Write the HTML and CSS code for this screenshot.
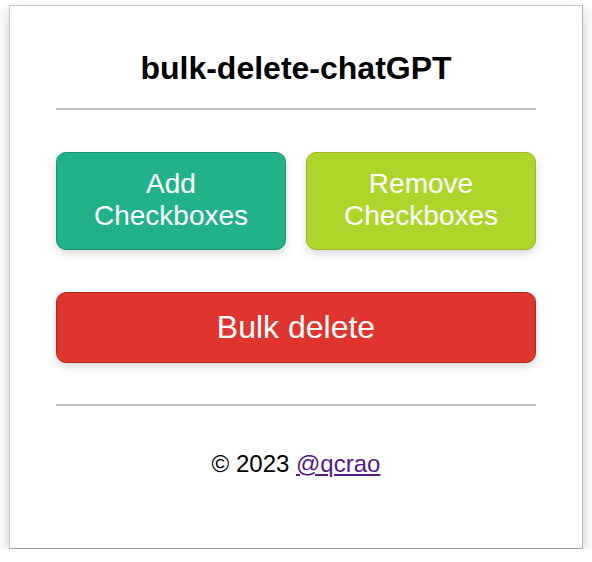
FILE: index.html
```html
<!DOCTYPE html>
<html>
<head>
<meta charset="utf-8">
<link rel="stylesheet" href="styles.css">
</head>
<body>
<div class="card">
  <h1 class="title">bulk-delete-chatGPT</h1>
  <hr class="rule">
  <div class="row">
    <button class="btn btn-add">Add Checkboxes</button>
    <button class="btn btn-remove">Remove Checkboxes</button>
  </div>
  <button class="btn-bulk">Bulk delete</button>
  <hr class="rule rule-bottom">
  <p class="footer">© 2023 <a href="#">@qcrao</a></p>
</div>
</body>
</html>
```

FILE: styles.css
```css
html, body {
  margin: 0;
  padding: 0;
  background: #ffffff;
}

body {
  font-family: "Liberation Sans", Arial, Helvetica, sans-serif;
  color: #000;
}

.card {
  box-sizing: border-box;
  width: 574px;
  height: 544px;
  margin: 5px 0 0 9px;
  padding: 44px 46px 0;
  border: 1px solid #c9c9c9;
  border-bottom-color: #9f9f9f;
  border-right-color: #b5b5b5;
  background: #fff;
  box-shadow: 0 5px 12px rgba(0, 0, 0, 0.22);
}

.title {
  margin: 0;
  font-size: 32px;
  line-height: 37px;
  font-weight: bold;
  text-align: center;
}

.rule {
  margin: 21px 0 0;
  height: 2px;
  border: 0;
  background: #c3c3c3;
}

.rule-bottom {
  margin-top: 41px;
}

.row {
  display: flex;
  gap: 20px;
  margin-top: 42px;
}

.btn {
  box-sizing: border-box;
  flex: 1;
  height: 98px;
  padding: 0 20px 2px;
  border-radius: 10px;
  font-family: inherit;
  font-size: 28px;
  line-height: 32px;
  color: #fff;
  box-shadow: 0 4px 8px rgba(0, 0, 0, 0.15);
}

.btn-add {
  background: #22b28a;
  border: 1px solid #1a9070;
}

.btn-remove {
  background: #add62a;
  border: 1px solid #a8ae2a;
}

.btn-bulk {
  box-sizing: border-box;
  display: block;
  width: 100%;
  height: 71px;
  margin-top: 42px;
  padding: 0;
  border-radius: 10px;
  border: 1px solid #b3261f;
  background: #e0342f;
  font-family: inherit;
  font-size: 32px;
  line-height: 37px;
  color: #fff;
  box-shadow: 0 4px 8px rgba(0, 0, 0, 0.15);
}

.footer {
  margin: 44px 0 0;
  font-size: 24px;
  line-height: 28px;
  text-align: center;
}

.footer a {
  color: #551a8b;
}
```
